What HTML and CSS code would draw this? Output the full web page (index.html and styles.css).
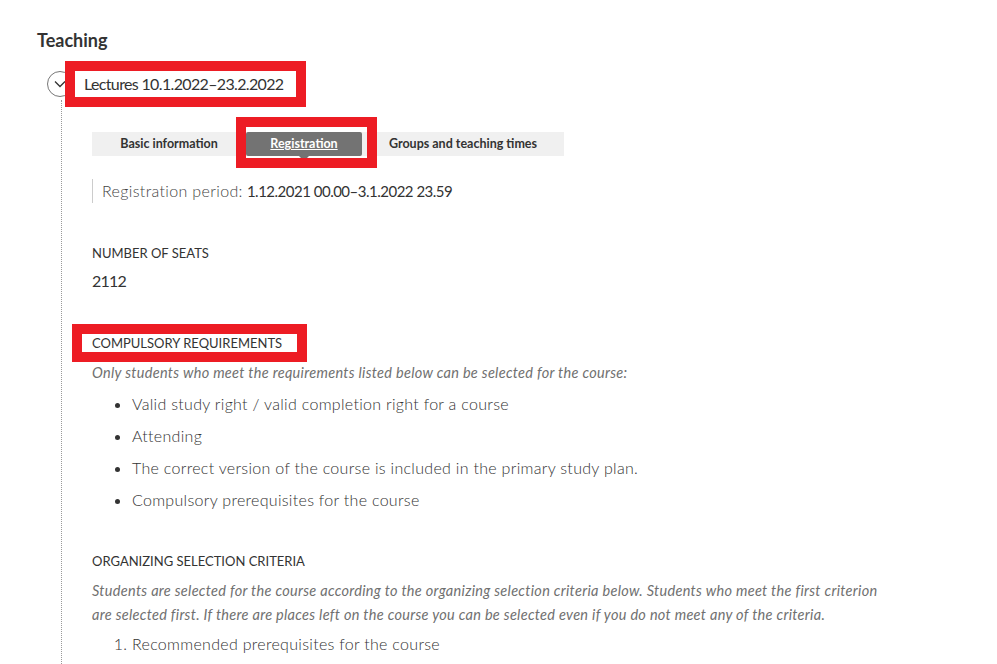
FILE: index.html
```html
<!DOCTYPE html>
<html lang="en">
<head>
    <meta charset="UTF-8">
    <meta name="viewport" content="width=device-width, initial-scale=1.0">
    <title>Teaching</title>
    <link rel="stylesheet" href="styles.css">
</head>
<body>

<div class="page">

    <h2 class="section-title">Teaching</h2>

    <!-- Studiebegivenhed -->
    <div class="event">
        <div class="event-header">
            <button class="toggle" aria-label="Collapse">
                <svg width="12" height="8" viewBox="0 0 12 8">
                    <path d="M1 1.5 L6 6.5 L11 1.5" fill="none" stroke="#333" stroke-width="1.3"/>
                </svg>
            </button>
            <span class="event-title marked">Lectures 10.1.2022–23.2.2022</span>
        </div>

        <div class="event-body">
            <div class="tabs">
                <a class="tab tab-basic">Basic information</a>
                <a class="tab tab-reg active">Registration</a>
                <a class="tab tab-groups">Groups and teaching times</a>
            </div>

            <div class="period">
                <span class="period-label">Registration period:</span>
                <span class="period-value">1.12.2021 00.00–3.1.2022 23.59</span>
            </div>

            <h4 class="field-label seats-label">Number of seats</h4>
            <div class="field-value">2112</div>

            <h4 class="field-label req-label"><span class="marked-label">Compulsory requirements</span></h4>
            <p class="hint">Only students who meet the requirements listed below can be selected for the course:</p>
            <ul class="req-list">
                <li>Valid study right / valid completion right for a course</li>
                <li>Attending</li>
                <li>The correct version of the course is included in the primary study plan.</li>
                <li>Compulsory prerequisites for the course</li>
            </ul>

            <h4 class="field-label crit-label">Organizing selection criteria</h4>
            <p class="hint hint-long">Students are selected for the course according to the organizing selection criteria below. Students who meet the first criterion are selected first. If there are places left on the course you can be selected even if you do not meet any of the criteria.</p>
            <ol class="req-list crit-list">
                <li>Recommended prerequisites for the course</li>
            </ol>
        </div>
    </div>

</div>

</body>
</html>
```

FILE: styles.css
```css
/* Generel styling */
body {
    margin: 0;
    font-family: "Lato", "Open Sans", sans-serif;
    color: #333;
    background-color: #fff;
}

.page {
    padding: 28px 36px 0 37px;
    height: 636px;
    overflow: hidden;
}

.section-title {
    margin: 0;
    font-size: 18px;
    line-height: 24px;
    font-weight: 700;
}

/* Begivenhed med foldeknap */
.event {
    margin-left: 10px;
    margin-top: 18px;
}

.event-header {
    display: flex;
    align-items: center;
    height: 28px;
}

.toggle {
    width: 26px;
    height: 26px;
    padding: 0;
    border: 1px solid #777;
    border-radius: 50%;
    background-color: #fff;
    display: flex;
    justify-content: center;
    align-items: center;
    margin-right: 2px;
}

.event-title {
    font-size: 16px;
    line-height: 26px;
    letter-spacing: -0.65px;
    padding: 0 13px 0 9px;
}

/* Røde markeringer */
.marked {
    outline: 10px solid #ed1c24;
}

.marked-label {
    display: inline-block;
    margin-left: -10px;
    padding: 0 15px 0 10px;
    line-height: 18px;
    outline: 10px solid #ed1c24;
}

.event-body {
    margin-left: 14px;
    margin-top: 2px;
    border-left: 1px dotted #999;
    padding-left: 30px;
    padding-top: 32px;
    height: 600px;
}

/* Faner */
.tabs {
    display: flex;
    width: 472px;
    height: 24px;
    background-color: #f0f0f0;
}

.tab {
    position: relative;
    font-size: 12.5px;
    font-weight: 700;
    line-height: 23px;
    text-align: center;
    color: #333;
    white-space: nowrap;
}

.tab-basic { width: 154px; }
.tab-reg { width: 116px; }
.tab-groups { width: 202px; }

.tab.active {
    background-color: #737373;
    color: #fff;
    text-decoration: underline;
    border-radius: 2px;
}

.tab.active::before {
    content: "";
    position: absolute;
    left: 50%;
    bottom: -5px;
    margin-left: -5px;
    border-left: 5px solid transparent;
    border-right: 5px solid transparent;
    border-top: 5px solid #737373;
}

.tab.active::after {
    content: "";
    position: absolute;
    left: -10px;
    top: -15px;
    right: -15px;
    bottom: -12px;
    border: 10px solid #ed1c24;
}

/* Tilmeldingsperiode */
.period {
    margin-top: 23px;
    border-left: 1px solid #ccc;
    padding-left: 9px;
    font-size: 16px;
    line-height: 24px;
}

.period-label {
    font-weight: 300;
    color: #444;
    letter-spacing: 0.35px;
}

.period-value {
    font-size: 15px;
    letter-spacing: -0.5px;
}

.field-label {
    margin: 0;
    font-size: 13px;
    line-height: 20px;
    font-weight: 400;
    text-transform: uppercase;
}

.seats-label {
    margin-top: 40px;
}

.field-value {
    margin-top: 6px;
    font-size: 16px;
    line-height: 24px;
    letter-spacing: -0.8px;
}

.req-label {
    margin-top: 40px;
}

.hint {
    margin: 10px 0 0 0;
    font-size: 14.5px;
    line-height: 20px;
    letter-spacing: 0.3px;
    font-style: italic;
    font-weight: 400;
    color: #707070;
}

.hint-long {
    margin-top: 8px;
    line-height: 24px;
    width: 800px;
}

.req-list {
    margin: 5px 0 0 0;
    padding-left: 40px;
    font-size: 16px;
    line-height: 32px;
    letter-spacing: 0.3px;
    font-weight: 300;
}

.crit-label {
    margin-top: 35px;
}

.crit-list {
    margin-top: 1px;
}
```
